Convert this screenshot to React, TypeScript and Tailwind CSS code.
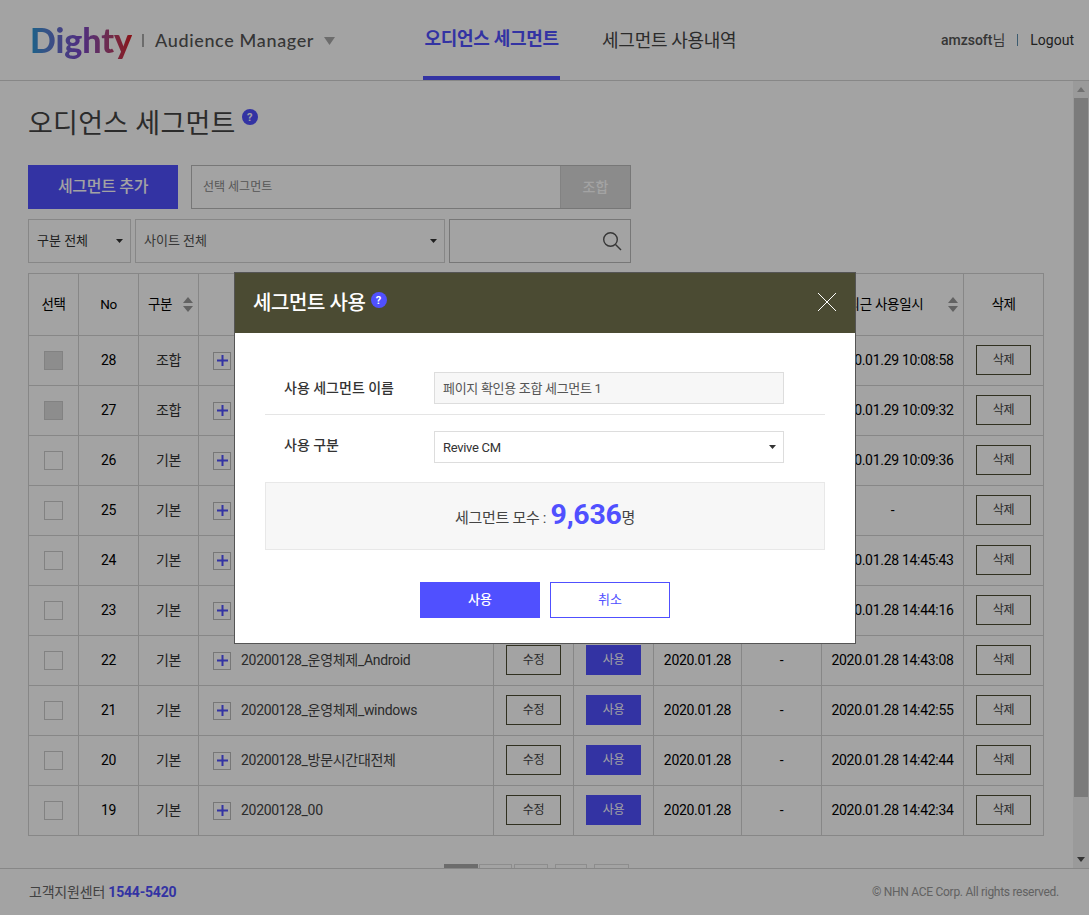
const FONT = "font-['Roboto','Noto_Sans_CJK_KR',sans-serif]";

const rows = [
  { no: 28, type: "조합", name: "페이지 확인용 조합 세그먼트 1", made: "2020.01.29", edited: "-", used: "2020.01.29 10:08:58", locked: true },
  { no: 27, type: "조합", name: "페이지 확인용 조합 세그먼트 2", made: "2020.01.29", edited: "-", used: "2020.01.29 10:09:32", locked: true },
  { no: 26, type: "기본", name: "20200129_페이지확인", made: "2020.01.29", edited: "-", used: "2020.01.29 10:09:36" },
  { no: 25, type: "기본", name: "20200129_방문자", made: "2020.01.29", edited: "-", used: "-" },
  { no: 24, type: "기본", name: "20200128_운영체제_iOS", made: "2020.01.28", edited: "-", used: "2020.01.28 14:45:43" },
  { no: 23, type: "기본", name: "20200128_운영체제_Mac", made: "2020.01.28", edited: "-", used: "2020.01.28 14:44:16" },
  { no: 22, type: "기본", name: "20200128_운영체제_Android", made: "2020.01.28", edited: "-", used: "2020.01.28 14:43:08" },
  { no: 21, type: "기본", name: "20200128_운영체제_windows", made: "2020.01.28", edited: "-", used: "2020.01.28 14:42:55" },
  { no: 20, type: "기본", name: "20200128_방문시간대전체", made: "2020.01.28", edited: "-", used: "2020.01.28 14:42:44" },
  { no: 19, type: "기본", name: "20200128_00", made: "2020.01.28", edited: "-", used: "2020.01.28 14:42:34" },
];

const cols = "grid grid-cols-[50px_60px_60px_295px_80px_80px_88px_80px_142px_79px]";
const cell = "flex items-center justify-center border-r border-[#d4d4d4] last:border-r-0";

/* Up + down sort arrows in table head */
function SortArrows({ className = "" }: { className?: string }) {
  return (
    <svg width="10" height="15" viewBox="0 0 10 15" className={className}>
      <path d="M5 0l5 6H0z" fill="#999" />
      <path d="M5 15l5-6H0z" fill="#999" />
    </svg>
  );
}

function Caret() {
  return (
    <svg width="7" height="4" viewBox="0 0 7 4">
      <path d="M0 0h7L3.5 4z" fill="#333" />
    </svg>
  );
}

function Help() {
  return (
    <span className="inline-flex items-center justify-center w-[16px] h-[16px] rounded-full bg-[#5050ff] text-white font-bold text-[11px] leading-none">
      ?
    </span>
  );
}

function OutlineBtn({ label }: { label: string }) {
  return (
    <button className="w-[55px] h-[30px] mb-px border border-[#4b4b33] bg-white text-[12px] text-[#444]">
      {label}
    </button>
  );
}

function SegmentTable() {
  return (
    <div className="w-[1016px] border border-[#d4d4d4] text-[14px] tracking-[-0.3px] text-black">
      <div className={`${cols} h-[62px] border-b border-[#d4d4d4] text-[13.5px]`}>
        <div className={cell}>선택</div>
        <div className={cell}>No</div>
        <div className={`${cell} pl-[4px]`}>
          구분
          <SortArrows className="ml-[11px]" />
        </div>
        <div className={cell}>세그먼트 이름</div>
        <div className={cell}>수정</div>
        <div className={cell}>사용</div>
        <div className={cell}>생성일</div>
        <div className={cell}>수정일</div>
        <div className={`${cell} pl-[21px] whitespace-nowrap`}>
          최근 사용일시
          <SortArrows className="ml-[25px]" />
        </div>
        <div className={cell}>삭제</div>
      </div>
      {rows.map((r) => (
        <div key={r.no} className={`${cols} h-[50px] border-b border-[#d4d4d4] last:h-[49px] last:border-b-0`}>
          <div className={cell}>
            <span className={`w-[19px] h-[19px] mb-px border border-[#ccc] ${r.locked ? "bg-[#ddd]" : "bg-white"}`} />
          </div>
          <div className={cell}>{r.no}</div>
          <div className={`${cell} text-[#333]`}>{r.type}</div>
          <div className={`${cell} justify-start pl-[14px] text-[#444]`}>
            <span className="w-[18px] h-[18px] mr-[10px] border border-[#bbb] flex items-center justify-center">
              <svg width="11" height="11" viewBox="0 0 11 11">
                <path d="M5.5 0v11M0 5.5h11" stroke="#5050ff" strokeWidth="2" />
              </svg>
            </span>
            {r.name}
          </div>
          <div className={cell}>
            <OutlineBtn label="수정" />
          </div>
          <div className={cell}>
            <button className="w-[55px] h-[30px] mb-px bg-[#5050ff] text-white text-[12px]">사용</button>
          </div>
          <div className={cell}>{r.made}</div>
          <div className={cell}>{r.edited}</div>
          <div className={cell}>{r.used}</div>
          <div className={cell}>
            <OutlineBtn label="삭제" />
          </div>
        </div>
      ))}
    </div>
  );
}

function Modal() {
  return (
    <div className="absolute left-[234px] top-[272px] w-[622px] h-[372px] border border-[#555] bg-white">
      <div className="h-[60px] bg-[#4b4b33] flex items-center pl-[18px] pr-[19px] text-white">
        <span className="text-[20px] tracking-[-0.4px] font-medium">세그먼트 사용</span>
        <span className="ml-[5px] mb-[6px] flex">
          <Help />
        </span>
        <svg width="18" height="18" viewBox="0 0 18 18" className="ml-auto mb-[2px]">
          <path d="M0 0l18 18M18 0L0 18" stroke="#fff" strokeWidth="1" />
        </svg>
      </div>
      <div className="px-[30px] pt-[39px]">
        <div className="flex items-center h-[32px] pl-[19px] text-[14px] text-[#333]">
          <span className="w-[150px] font-medium">사용 세그먼트 이름</span>
          <div className="w-[350px] h-[32px] border border-[#ddd] bg-[#f7f7f7] flex items-center px-[8px] pt-[2px] text-[13px] tracking-[-0.3px] text-[#555]">
            페이지 확인용 조합 세그먼트 1
          </div>
        </div>
        <div className="mt-[10px] border-t border-[#e5e5e5]" />
        <div className="mt-[16px] flex items-center h-[32px] pl-[19px] text-[14px] text-[#333]">
          <span className="w-[150px] font-medium mb-[3px]">사용 구분</span>
          <div className="w-[350px] h-[32px] border border-[#ddd] flex items-center justify-between pl-[8px] pr-[7px] text-[13px] tracking-[-0.3px] text-[#333]">
            <span className="pt-[2px]">Revive CM</span>
            <Caret />
          </div>
        </div>
        <div className="mt-[19px] h-[68px] border border-[#e8e8e8] bg-[#f7f7f7] flex items-center justify-center text-[15px] tracking-[-0.3px] text-[#444]">
          <span className="mt-[4px] mr-[1px]">세그먼트 모수 :&nbsp;</span>
          <span className="text-[#5050ff] text-[28.5px] font-bold leading-none mb-[2px]">9,636</span>
          <span className="mt-[4px]">명</span>
        </div>
        <div className="mt-[32px] flex justify-center gap-[10px] text-[13px]">
          <button className="w-[120px] h-[36px] bg-[#5050ff] text-white font-medium">사용</button>
          <button className="w-[120px] h-[36px] border border-[#5050ff] text-[#5050ff]">취소</button>
        </div>
      </div>
    </div>
  );
}

export default function App() {
  return (
    <div className={`${FONT} relative w-[1089px] h-[915px] overflow-hidden bg-white flex flex-col text-[#333]`}>
      {/* top bar */}
      <header className="h-[81px] shrink-0 border-b border-[#d4d4d4] flex items-center pl-[30px] pr-[15px]">
        <span className="w-[102px] text-[34px] font-black leading-[48px] font-['Lato',sans-serif] tracking-[-0.1px] whitespace-nowrap text-transparent bg-clip-text bg-gradient-to-r from-[#1c9ad6] via-[#7a45c8] to-[#d8141c]">
          Dighty
        </span>
        <span className="ml-[10px] w-[2px] h-[13px] bg-[#aaa]" />
        <span className="ml-[11px] text-[18px] font-['Lato',sans-serif] font-medium text-[#555] tracking-[0.65px] whitespace-nowrap">
          Audience Manager
        </span>
        <svg width="11" height="8" viewBox="0 0 11 8" className="ml-[10px] mt-[2px]">
          <path d="M0 0h11L5.5 8z" fill="#aaa" />
        </svg>
        <nav className="ml-[88px] flex h-full text-[18px] tracking-[-0.3px]">
          <a className="w-[137px] h-full flex items-center justify-center border-b-4 border-[#5050ff] text-[#5050ff] font-bold -mb-px">
            오디언스 세그먼트
          </a>
          <a className="ml-[42px] h-full flex items-center text-[#444]">세그먼트 사용내역</a>
        </nav>
        <div className="ml-auto flex items-center text-[14px]">
          <span className="font-medium text-[#555]">amzsoft</span>
          <span className="text-[#555]">님</span>
          <span className="mx-[12px] w-px h-[12px] bg-[#5d8fb0]" />
          <span className="text-[#333]">Logout</span>
        </div>
      </header>

      <div className="flex-1 min-h-0 flex">
        <main className="flex-1 overflow-hidden pl-[28px]">
          <div className="mt-[24px] flex items-center h-[38px]">
            <h1 className="text-[27px] tracking-[0.25px] text-[#444] whitespace-nowrap">오디언스 세그먼트</h1>
            <span className="ml-[6px] mb-[14px] flex">
              <Help />
            </span>
          </div>

          <div className="mt-[22px] flex h-[44px]">
            <button className="w-[150px] bg-[#5050ff] text-white text-[16px] tracking-[-0.3px] font-medium">세그먼트 추가</button>
            <div className="ml-[13px] w-[440px] border border-[#bbb] flex">
              <span className="flex-1 flex items-center pl-[11px] text-[12px] text-[#888]">선택 세그먼트</span>
              <button className="w-[70px] bg-[#d9d9d9] border-l border-[#ccc] text-white text-[14px] font-medium">조합</button>
            </div>
          </div>

          <div className="mt-[10px] flex h-[44px] text-[13px]">
            <div className="w-[103px] border border-[#d4d4d4] flex items-center justify-between pl-[8px] pr-[7px] text-[#333]">
              구분 전체
              <Caret />
            </div>
            <div className="ml-[4px] w-[310px] border border-[#d4d4d4] flex items-center justify-between pl-[8px] pr-[7px] text-[#555]">
              사이트 전체
              <Caret />
            </div>
            <div className="ml-[4px] w-[182px] border border-[#bbb] flex items-center justify-end pr-[8px]">
              <svg width="20" height="20" viewBox="0 0 20 20" fill="none" stroke="#555" strokeWidth="1.4">
                <circle cx="8.5" cy="8.5" r="6.8" />
                <path d="M13.5 13.5L19 19" />
              </svg>
            </div>
          </div>

          <div className="mt-[10px]">
            <SegmentTable />
          </div>

          <div className="mt-[28px] ml-[416px] flex h-[36px] gap-[1px] text-[13px]">
            <span className="w-[34px] bg-[#aaa]" />
            <span className="w-[33px] border border-[#ddd]" />
            <span className="ml-[1px] w-[34px] border border-[#ddd]" />
            <span className="ml-[6px] w-[32px] border border-[#ddd]" />
            <span className="ml-[6px] w-[35px] border border-[#ddd]" />
          </div>
        </main>

        {/* scrollbar */}
        <div className="w-[16px] bg-[#f1f1f1] flex flex-col items-center">
          <svg width="8" height="5" viewBox="0 0 8 5" className="mt-[6px]">
            <path d="M4 0l4 5H0z" fill="#b0b0b0" />
          </svg>
          <div className="mt-[6px] w-[14px] h-[699px] bg-[#c1c1c1]" />
          <svg width="8" height="5" viewBox="0 0 8 5" className="mt-auto mb-[6px]">
            <path d="M0 0h8L4 5z" fill="#505050" />
          </svg>
        </div>
      </div>

      <footer className="h-[47px] shrink-0 border-t border-[#d4d4d4] bg-white flex items-center justify-between pl-[29px] pr-[30px] relative">
        <span className="text-[14px] tracking-[-0.2px] text-[#666]">
          고객지원센터 <b className="text-[#5050ff] font-bold">1544-5420</b>
        </span>
        <span className="text-[12px] tracking-[-0.28px] text-[#999]">© NHN ACE Corp. All rights reserved.</span>
      </footer>

      {/* dim layer + dialog */}
      <div className="absolute inset-0 bg-black/36" />
      <Modal />
    </div>
  );
}
